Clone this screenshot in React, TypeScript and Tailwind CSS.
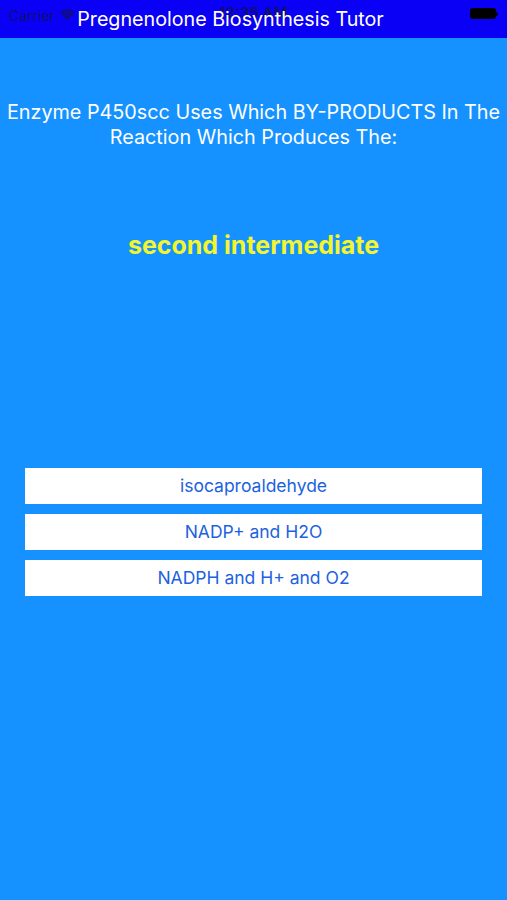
import { Wifi } from 'lucide-react';

const answers = ['isocaproaldehyde', 'NADP+ and H2O', 'NADPH and H+ and O2'];

const font = { fontFamily: 'Inter, "Liberation Sans", sans-serif' };

export default function App() {
  return (
    <div className="w-[507px] h-[900px] bg-[#1592ff] flex flex-col" style={font}>
      {/* status bar + nav title */}
      <div className="relative h-[38px] bg-[#0a00f6] shrink-0">
        <div className="absolute left-[9px] top-[5px] flex items-center gap-[5px] text-[14px] text-[#10106a]">
          <span>Carrier</span>
          <Wifi size={15} strokeWidth={3} className="text-[#10106a] -mt-[3px]" />
        </div>
        <div className="absolute left-0 right-0 top-[2px] text-center text-[15px] font-semibold text-[#10106a]">
          12:35 AM
        </div>
        <div className="absolute right-[9px] top-[8px] flex items-center">
          <div className="w-[26px] h-[11px] rounded-[3px] bg-black" />
          <div className="w-[2px] h-[4px] bg-black rounded-r-sm" />
        </div>
        <div className="absolute left-0 right-0 top-[6px] pr-[46px] text-center text-[19.7px] leading-[26px] text-white">
          Pregnenolone Biosynthesis Tutor
        </div>
      </div>

      <div className="mt-[62px] px-[4px] text-center text-white text-[19.8px] leading-[25px]">
        Enzyme P450scc Uses Which BY-PRODUCTS In The
        <br />
        Reaction Which Produces The:
      </div>

      <div className="mt-[80px] text-center text-[#f5f52c] text-[25px] font-bold leading-[30px]">
        second intermediate
      </div>

      <div className="mt-[208px] flex flex-col gap-[10px] px-[25px]">
        {answers.map((a) => (
          <button
            key={a}
            className="h-[36px] w-full bg-white text-[#1c62e0] text-[17.5px] flex items-center justify-center"
          >
            {a}
          </button>
        ))}
      </div>
    </div>
  );
}
